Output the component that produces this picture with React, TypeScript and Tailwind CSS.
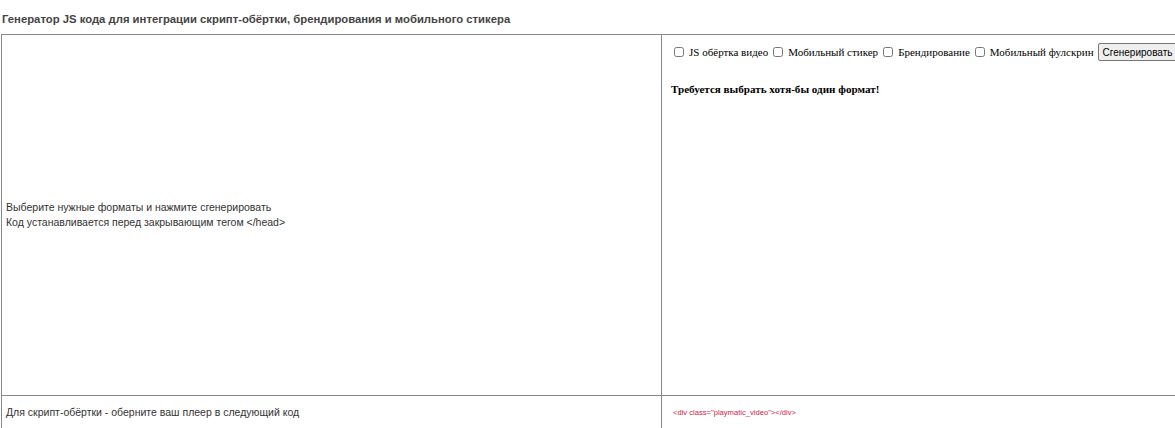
import React, { useState } from 'react';

const formats = [
  { id: 'wrapper', label: 'JS обёртка видео' },
  { id: 'sticker', label: 'Мобильный стикер' },
  { id: 'branding', label: 'Брендирование' },
  { id: 'fullscreen', label: 'Мобильный фулскрин' },
];

const App: React.FC = () => {
  const [checked, setChecked] = useState<Record<string, boolean>>({});

  const toggle = (id: string) => setChecked(c => ({ ...c, [id]: !c[id] }));

  return (
    <div className="w-[1175px] h-[428px] overflow-hidden bg-white">
      <h3 className="pt-[12px] pl-[2px] h-[34px] text-[11.3px] leading-[14px] font-bold text-[#444] font-['Liberation_Sans',Arial,sans-serif]">
        Генератор JS кода для интеграции скрипт-обёртки, брендирования и мобильного стикера
      </h3>

      <div className="ml-[1px] w-[1200px] grid grid-cols-[660px_1fr] border-t border-l border-[#888]">
        {/* row 1 */}
        <div className="h-[361px] flex flex-col justify-center px-[4px] border-r border-b border-[#888] text-[10.5px] leading-[15px] text-[#333] font-['Liberation_Sans',Arial,sans-serif]">
          <div>Выберите нужные форматы и нажмите сгенерировать</div>
          <div>Код устанавливается перед закрывающим тегом &lt;/head&gt;</div>
        </div>
        <div className="h-[361px] pt-[8px] pl-[9px] border-b border-[#888] font-['Liberation_Serif','Times_New_Roman',serif] text-[11px] text-black">
          <div className="flex items-center h-[18px] whitespace-nowrap">
            {formats.map(f => (
              <label key={f.id} className="flex items-center">
                <input
                  type="checkbox"
                  checked={!!checked[f.id]}
                  onChange={() => toggle(f.id)}
                  className="w-[10px] h-[10px] ml-[3px] mr-[5px]"
                />
                <span className="mr-[2px]">{f.label}</span>
              </label>
            ))}
            <button className="ml-[2px] h-[18px] px-[4px] text-[10px] font-['Liberation_Sans',Arial,sans-serif] bg-[#efefef] border border-[#767676] rounded-[2px]">
              Сгенерировать
            </button>
          </div>
          <p className="mt-[20px] font-bold text-[11.1px]">Требуется выбрать хотя-бы один формат!</p>
        </div>

        {/* row 2 */}
        <div className="h-[34px] flex items-center px-[4px] border-r border-[#888] text-[10.5px] text-[#333] font-['Liberation_Sans',Arial,sans-serif]">
          Для скрипт-обёртки - оберните ваш плеер в следующий код
        </div>
        <div className="h-[34px] flex items-center pl-[11px]">
          <code className="text-[7.6px] text-[#c7254e] font-['Liberation_Sans',Arial,sans-serif]">
            &lt;div class="playmatic_video"&gt;&lt;/div&gt;
          </code>
        </div>
      </div>
    </div>
  );
};

export default App;
